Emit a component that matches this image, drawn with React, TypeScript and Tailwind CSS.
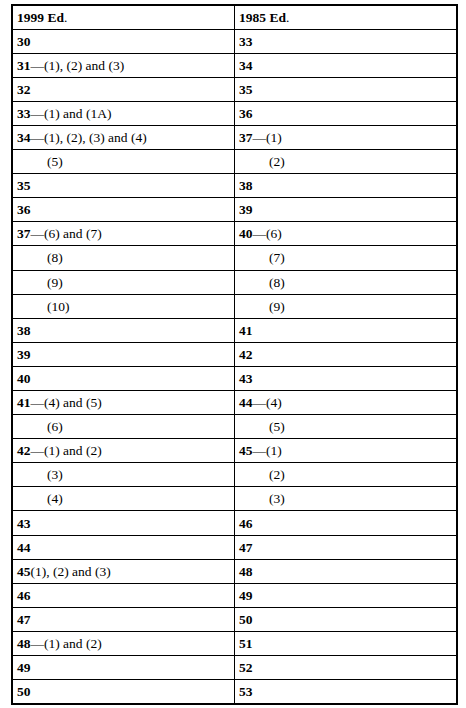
import React from 'react';

type Cell = { num?: string; rest?: string; sub?: boolean };

const rows: [Cell, Cell][] = [
  [{ num: '30' }, { num: '33' }],
  [{ num: '31', rest: '—(1), (2) and (3)' }, { num: '34' }],
  [{ num: '32' }, { num: '35' }],
  [{ num: '33', rest: '—(1) and (1A)' }, { num: '36' }],
  [{ num: '34', rest: '—(1), (2), (3) and (4)' }, { num: '37', rest: '—(1)' }],
  [{ rest: '(5)', sub: true }, { rest: '(2)', sub: true }],
  [{ num: '35' }, { num: '38' }],
  [{ num: '36' }, { num: '39' }],
  [{ num: '37', rest: '—(6) and (7)' }, { num: '40', rest: '—(6)' }],
  [{ rest: '(8)', sub: true }, { rest: '(7)', sub: true }],
  [{ rest: '(9)', sub: true }, { rest: '(8)', sub: true }],
  [{ rest: '(10)', sub: true }, { rest: '(9)', sub: true }],
  [{ num: '38' }, { num: '41' }],
  [{ num: '39' }, { num: '42' }],
  [{ num: '40' }, { num: '43' }],
  [{ num: '41', rest: '—(4) and (5)' }, { num: '44', rest: '—(4)' }],
  [{ rest: '(6)', sub: true }, { rest: '(5)', sub: true }],
  [{ num: '42', rest: '—(1) and (2)' }, { num: '45', rest: '—(1)' }],
  [{ rest: '(3)', sub: true }, { rest: '(2)', sub: true }],
  [{ rest: '(4)', sub: true }, { rest: '(3)', sub: true }],
  [{ num: '43' }, { num: '46' }],
  [{ num: '44' }, { num: '47' }],
  [{ num: '45', rest: '(1), (2) and (3)' }, { num: '48' }],
  [{ num: '46' }, { num: '49' }],
  [{ num: '47' }, { num: '50' }],
  [{ num: '48', rest: '—(1) and (2)' }, { num: '51' }],
  [{ num: '49' }, { num: '52' }],
  [{ num: '50' }, { num: '53' }],
];

function TableCell({ cell }: { cell: Cell }) {
  return (
    <td className="border border-black h-[24.1px] px-[4px] py-0 align-middle">
      <span className={cell.sub ? 'pl-[30px]' : ''}>
        {cell.num && <b>{cell.num}</b>}
        {cell.rest}
      </span>
    </td>
  );
}

export default function App() {
  return (
    <div className="bg-white min-h-[708px] pt-[4px] pl-[11px]">
      <table
        className="w-[447px] border-collapse border-2 border-black table-fixed text-[13.5px] leading-[15px] text-black"
        style={{ fontFamily: '"Liberation Serif", "Times New Roman", serif' }}
      >
        <tbody>
          <tr>
            <td className="border border-black h-[24.1px] px-[4px] py-0">
              <b>1999 Ed</b>.
            </td>
            <td className="border border-black h-[24.1px] px-[4px] py-0">
              <b>1985 Ed</b>.
            </td>
          </tr>
          {rows.map((r, i) => (
            <tr key={i}>
              <TableCell cell={r[0]} />
              <TableCell cell={r[1]} />
            </tr>
          ))}
        </tbody>
      </table>
    </div>
  );
}
